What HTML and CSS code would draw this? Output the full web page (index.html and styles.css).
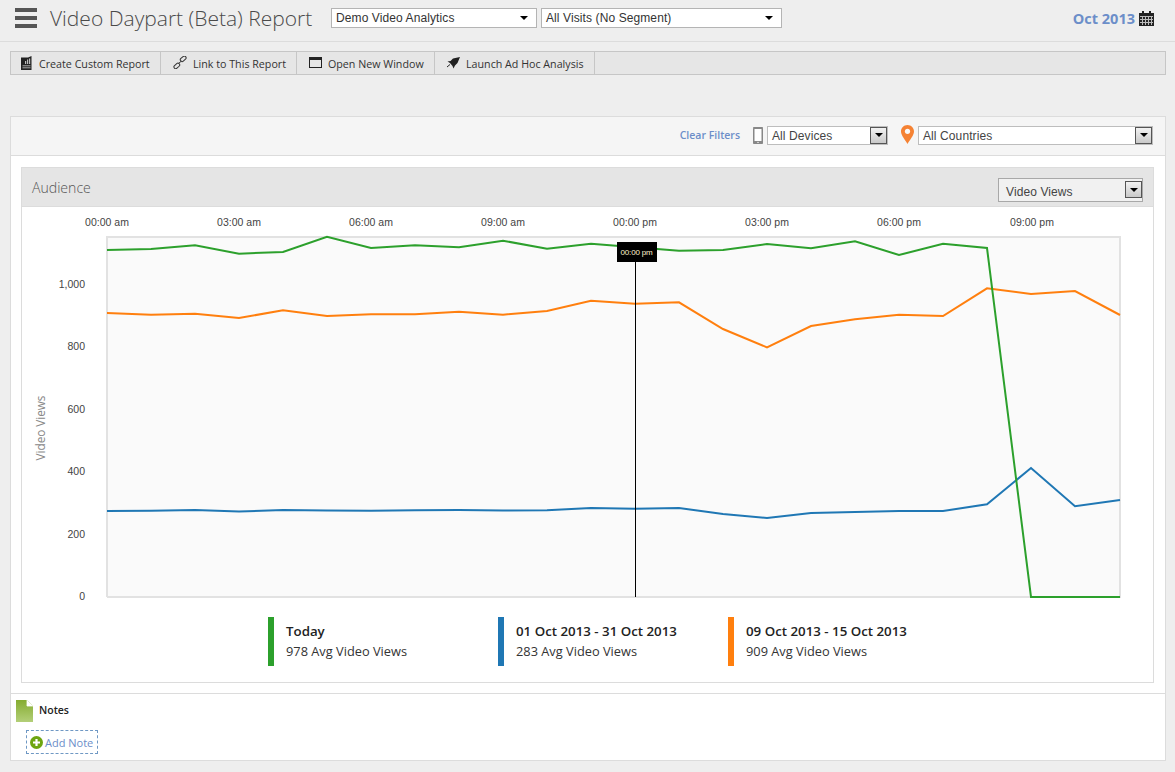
FILE: index.html
```html
<!DOCTYPE html>
<html lang="en">
<head>
  <meta charset="UTF-8" />
  <title>Video Daypart (Beta) Report</title>
  <link rel="stylesheet" href="styles.css">
</head>
<body>
<header class="top">
  <div class="burger"><i></i><i></i><i></i></div>
  <h1>Video Daypart (Beta) Report</h1>
  <div class="pick pick-site"><span>Demo Video Analytics</span><b class="caret"></b></div>
  <div class="pick pick-seg"><span>All Visits (No Segment)</span><b class="caret"></b></div>
  <div class="period">
    <span>Oct 2013</span>
    <svg width="15" height="15" viewBox="0 0 15 15">
      <rect x="0" y="2" width="15" height="13" fill="#222"/>
      <rect x="3" y="0" width="2" height="3" fill="#222"/>
      <rect x="10" y="0" width="2" height="3" fill="#222"/>
      <path d="M1 5.5h13M1 8.5h13M1 11.5h13M3.5 5v9M6.5 5v9M9.5 5v9M12.5 5v9" stroke="#bbb" stroke-width="1" fill="none"/>
    </svg>
  </div>
</header>

<nav class="tools">
  <a class="tool tool-custom">
    <svg width="11" height="14" viewBox="0 0 11 14"><path d="M0 1.500 L7 1.500 L10.500 0 V14 H0Z" fill="#222"/><path d="M4 5h1.200v3H4zM6 3.500h1.200V8H6zM8 2.500h1.200V8H8z" fill="#bbb"/><path d="M1.500 9.800h8M1.500 11.800h8" stroke="#ccc" stroke-width="0.800"/></svg>
    Create Custom Report</a>
  <a class="tool tool-link">
    <svg width="14" height="13" viewBox="0 0 14 13"><g fill="none" stroke="#333" stroke-width="1"><rect x="7" y="1.200" width="6.500" height="3.600" rx="1.800" transform="rotate(-42 10 3)"/><rect x="0.700" y="8" width="6.500" height="3.600" rx="1.800" transform="rotate(-42 4 10)"/><path d="M5.500 7.500 L8.500 5"/></g></svg>
    Link to This Report</a>
  <a class="tool tool-window">
    <svg width="13" height="11" viewBox="0 0 13 11"><rect x="0.500" y="0.500" width="12" height="10" fill="none" stroke="#222"/><rect x="0" y="0" width="13" height="3" fill="#222"/></svg>
    Open New Window</a>
  <a class="tool tool-launch">
    <svg width="13" height="12" viewBox="0 0 13 12"><path d="M13 0 L6 1.500 L3.500 4 L0.500 4.500 L3 6 L5.500 9 L6.500 11.500 L8 8.500 L10.500 6 Z" fill="#222"/><path d="M0 10 L3 7.500" stroke="#222" stroke-width="1"/></svg>
    Launch Ad Hoc Analysis</a>
</nav>

<main class="panel">
  <div class="filters">
    <a class="clear">Clear Filters</a>
    <svg class="phone" width="10" height="17" viewBox="0 0 10 17"><rect x="0.750" y="0.750" width="8.500" height="15.500" rx="1.500" fill="#fff" stroke="#888" stroke-width="1.500"/><rect x="0" y="0" width="10" height="2" rx="1" fill="#888"/><rect x="0" y="14" width="10" height="3" rx="1" fill="#888"/><circle cx="5" cy="15.400" r="0.700" fill="#fff"/></svg>
    <div class="combo combo-device"><span>All Devices</span><b class="drop"><i class="caret"></i></b></div>
    <svg class="pin" width="13" height="19" viewBox="0 0 13 19"><path d="M6.500 0C2.900 0 0 2.900 0 6.400c0 4 4.500 8.600 6.500 12.600 2-4 6.500-8.600 6.500-12.600C13 2.900 10.100 0 6.500 0z" fill="#f58233"/><circle cx="6.500" cy="6.300" r="2.600" fill="#f8f8f8"/></svg>
    <div class="combo combo-country"><span>All Countries</span><b class="drop"><i class="caret"></i></b></div>
  </div>

  <section class="chart-box">
    <div class="chart-head">
      <h2>Audience</h2>
      <div class="combo combo-metric"><span>Video Views</span><b class="drop"><i class="caret"></i></b></div>
    </div>

    <svg class="chart" width="1132" height="404" viewBox="22 207 1132 404">
      <rect x="107" y="237" width="1013" height="360" fill="#fafafa"/>
      <path d="M107 597V237H1120V597H107" fill="none" stroke="#e2e2e2" stroke-width="2"/>

      <g class="tick-x" text-anchor="middle">
        <text x="107" y="226">00:00 am</text>
        <text x="239" y="226">03:00 am</text>
        <text x="371" y="226">06:00 am</text>
        <text x="503" y="226">09:00 am</text>
        <text x="635" y="226">00:00 pm</text>
        <text x="767" y="226">03:00 pm</text>
        <text x="899" y="226">06:00 pm</text>
        <text x="1032" y="226">09:00 pm</text>
      </g>
      <g class="tick-y" text-anchor="end">
        <text x="85" y="288">1,000</text>
        <text x="85" y="350">800</text>
        <text x="85" y="413">600</text>
        <text x="85" y="475">400</text>
        <text x="85" y="538">200</text>
        <text x="85" y="600">0</text>
      </g>
      <text class="axis-name" transform="translate(45 428) rotate(-90)" text-anchor="middle">Video Views</text>

      <polyline class="line" stroke="#1f77b4" points="107,511 151,510.7 195,510 239,511.500 283,510 327,510.500 371,510.800 415,510.300 459,510 503,510.600 547,510.200 591,508 635,508.700 679,508 723,514 767,518 811,513 855,512 899,511 943,511 987,504.300 1031,468 1075,506.300 1120,500"/>
      <polyline class="line" stroke="#ff7f0e" points="107,313 151,314.700 195,313.700 239,318 283,310.300 327,316 371,314.300 415,314.300 459,311.700 503,314.700 547,311 591,300.700 635,303.700 679,302.300 723,329 767,347.300 811,326 855,319.300 899,314.700 943,316 987,288.300 1031,294 1075,291 1120,315"/>
      <polyline class="line" stroke="#2ca02c" points="107,250 151,249 195,245.300 239,253.700 283,252 327,236.700 371,248 415,245.300 459,247.300 503,240.700 547,248.700 591,243.700 635,247.300 679,250.700 723,250 767,244 811,248.300 855,241.300 899,255 943,243.700 987,248 1031,597 1075,597 1120,597"/>

      <path d="M635.500 262V597" stroke="#000" stroke-width="1"/>
      <rect x="617" y="242" width="40" height="20" fill="#000"/>
      <text class="tip" x="636.500" y="255" text-anchor="middle">00:00 pm</text>
    </svg>

    <div class="legend">
      <div class="leg leg-green"><strong>Today</strong><span>978 Avg Video Views</span></div>
      <div class="leg leg-blue"><strong>01 Oct 2013 - 31 Oct 2013</strong><span>283 Avg Video Views</span></div>
      <div class="leg leg-orange"><strong>09 Oct 2013 - 15 Oct 2013</strong><span>909 Avg Video Views</span></div>
    </div>
  </section>

  <section class="notes">
    <div class="notes-head">
      <svg width="17" height="22" viewBox="0 0 17 22"><defs><linearGradient id="noteFill" x1="0" y1="0" x2="0" y2="1"><stop offset="0" stop-color="#85ac30"/><stop offset="1" stop-color="#b3cf78"/></linearGradient></defs><path d="M0 0H11L17 6V22H0Z" fill="url(#noteFill)"/><path d="M11 0V6H17Z" fill="#fff"/><path d="M11 0V6H17" fill="none" stroke="#fff" stroke-width="0.800"/></svg>
      <h3>Notes</h3>
    </div>
    <a class="add-note">
      <svg width="13" height="13" viewBox="0 0 13 13"><circle cx="6.500" cy="6.500" r="6.500" fill="#6ea510"/><path d="M6.500 3v7M3 6.500h7" stroke="#fff" stroke-width="2.200"/></svg>
      Add Note</a>
  </section>
</main>
</body>
</html>
```

FILE: styles.css
```css
body {
  margin: 0;
  background: #eeeeee;
  font-family: "Open Sans", sans-serif;
  color: #222;
}

/* top bar */
.top {
  display: flex;
  align-items: center;
  height: 41px;
  border-bottom: 1px solid #dcdcdc;
  padding: 0 21px 0 15px;
}
.burger {
  width: 22px;
  display: flex;
  flex-direction: column;
  gap: 4px;
  margin-top: -6px;
}
.burger i {
  display: block;
  height: 4px;
  background: #555;
}
h1 {
  margin: -6px 0 0 13px;
  font-size: 21px;
  font-weight: 300;
  color: #4a4a4a;
  width: 281px;
  white-space: nowrap;
}
.pick {
  box-sizing: border-box;
  height: 20px;
  background: #fff;
  border: 1px solid #b4b4b4;
  display: flex;
  align-items: center;
  justify-content: space-between;
  padding: 0 8px 0 4px;
  margin-top: -6px;
  font: 12px "Liberation Sans", sans-serif;
  letter-spacing: 0.100px;
  color: #333;
}
.pick-site {
  width: 206px;
  margin-right: 4px;
}
.pick-seg {
  width: 241px;
}
.caret {
  display: block;
  width: 0;
  height: 0;
  border-left: 4px solid transparent;
  border-right: 4px solid transparent;
  border-top: 4px solid #000;
}
.period {
  margin-left: auto;
  margin-top: -5px;
  display: flex;
  align-items: center;
  gap: 4px;
  font-size: 14.500px;
  font-weight: 700;
  color: #6c8ec9;
}

/* toolbar */
.tools {
  display: flex;
  box-sizing: border-box;
  height: 24px;
  margin: 9px 9px 0 10px;
  background: #e6e6e6;
  border: 1px solid #c6c6c6;
  font-size: 10.700px;
  color: #333;
}
.tool {
  box-sizing: border-box;
  display: flex;
  align-items: center;
  gap: 7px;
  padding-top: 1px;
  border-right: 1px solid #c6c6c6;
  white-space: nowrap;
}
.tool-custom { width: 150px; padding-left: 10px; gap: 7px; }
.tool-link { width: 136px; padding-left: 12px; gap: 6px; }
.tool-window { width: 138px; padding-left: 12px; gap: 6px; }
.tool-launch { width: 160px; padding-left: 12px; gap: 6px; }
.tool svg { margin-top: -2px; }

/* report panel */
.panel {
  box-sizing: border-box;
  height: 645px;
  margin: 41px 9px 0 10px;
  background: #fff;
  border: 1px solid #dcdcdc;
}
.filters {
  box-sizing: border-box;
  height: 39px;
  background: #f5f5f5;
  border-bottom: 1px solid #dcdcdc;
  display: flex;
  align-items: center;
  justify-content: flex-end;
  padding-right: 12px;
}
.clear {
  font-size: 10.500px;
  font-weight: 600;
  color: #6c8ec9;
  margin: -2px 13px 0 0;
}
.phone {
  margin: -2px 4px 0 0;
}
.pin {
  margin: -4px 4px 0 13px;
}
.combo {
  box-sizing: border-box;
  height: 19px;
  margin-top: -2px;
  background: #fff;
  border: 1px solid #bdbdbd;
  display: flex;
  align-items: center;
  justify-content: space-between;
  padding-left: 4px;
  font: 12px "Liberation Sans", sans-serif;
  letter-spacing: 0.100px;
  color: #444;
}
.combo span {
  padding-top: 2px;
}
.combo-device { width: 121px; }
.combo-country { width: 235px; }
.combo-metric {
  width: 145px;
  height: 24px;
  padding-left: 7px;
  background: #f1f1f1;
  border-color: #a8a8a8;
}
.combo-metric span {
  padding-top: 4px;
}
.drop {
  box-sizing: border-box;
  width: 17px;
  height: 17px;
  border: 1px solid #555;
  background: linear-gradient(#f2f2f2, #c9c9c9);
  display: flex;
  align-items: center;
  justify-content: center;
}

/* chart */
.chart-box {
  box-sizing: border-box;
  height: 516px;
  margin: 11px 11px 0 10px;
  border: 1px solid #dcdcdc;
}
.chart-head {
  box-sizing: border-box;
  height: 39px;
  background: #e5e5e5;
  border-bottom: 1px solid #dcdcdc;
  display: flex;
  align-items: center;
  justify-content: space-between;
  padding: 0 10px 0 10px;
}
.chart-head h2 {
  margin: 1px 0 0;
  font-size: 14.100px;
  font-weight: 300;
  color: #555;
}
.chart-head .combo {
  margin-top: 5px;
}
.chart {
  display: block;
}
.tick-x text, .tick-y text {
  font: 10.500px "Liberation Sans", sans-serif;
  fill: #444;
}
.axis-name {
  font: 11.700px "Open Sans", sans-serif;
  fill: #888;
}
.line {
  fill: none;
  stroke-width: 2;
}
.tip {
  font: 8px "Liberation Sans", sans-serif;
  letter-spacing: -0.200px;
  fill: #fff3cc;
}
.legend {
  display: flex;
  padding: 6px 0 0 246px;
}
.leg {
  box-sizing: border-box;
  width: 230px;
  height: 49px;
  display: flex;
  flex-direction: column;
  justify-content: center;
  gap: 5px;
  padding: 0 0 0 18px;
  font-size: 12.800px;
  line-height: 15px;
  color: #333;
  position: relative;
  white-space: nowrap;
}
.leg::before {
  content: "";
  width: 6px;
  height: 49px;
  position: absolute;
  left: 0;
  top: 0;
}
.leg strong { font-size: 13.300px; font-weight: 600; color: #222; }
.leg-green::before { background: #2ca02c; }
.leg-blue::before { background: #1f77b4; }
.leg-orange::before { background: #ff7f0e; }

/* notes */
.notes {
  margin-top: 10px;
  border-top: 1px solid #dcdcdc;
  padding: 6px 0 0 5px;
}
.notes-head {
  display: flex;
  align-items: center;
  gap: 6px;
}
.notes-head h3 {
  margin: -3px 0 0;
  font-size: 10.500px;
  font-weight: 600;
}
.add-note {
  box-sizing: border-box;
  width: 72px;
  height: 24px;
  margin: 8px 0 0 10px;
  border: 1px dashed #6f98c4;
  display: flex;
  align-items: center;
  gap: 2px;
  padding-left: 3px;
  font-size: 11px;
  color: #6c8ec9;
}
```
